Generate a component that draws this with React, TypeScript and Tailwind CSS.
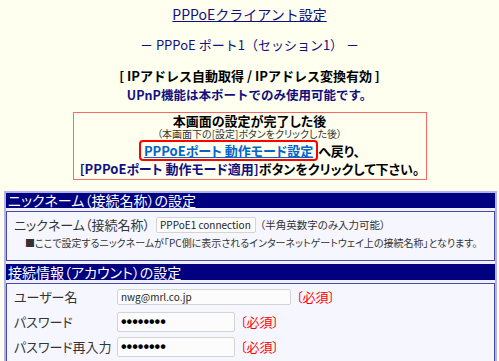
const FONT = "font-['Noto_Sans_CJK_JP','Noto_Sans',sans-serif]";
const PALT = "[font-feature-settings:'palt']";

function Required() {
  return <span className="ml-[5px] text-[13px] text-[#ff0000]">〔必須〕</span>;
}

interface FieldRowProps {
  label: string;
  value: string;
  password?: boolean;
  wide?: boolean;
}

function FieldRow({ label, value, password, wide }: FieldRowProps) {
  return (
    <div className="flex items-center">
      <span className="w-[103px] text-[13px] leading-[16px] text-[#333]">{label}</span>
      <div
        className={
          "flex items-center border border-[#d4d4d4] rounded-[2px] bg-[#fcfcfc] px-[3px] " +
          (wide ? "w-[174px] h-[16px]" : "w-[118px] h-[20px]")
        }
      >
        {password ? (
          <span className="font-['Liberation_Sans',sans-serif] text-[16px] font-bold leading-none text-black">
            ••••••••
          </span>
        ) : (
          <span className="text-[10px] leading-none text-[#222]">{value}</span>
        )}
      </div>
      <Required />
    </div>
  );
}

export default function App() {
  return (
    <div className={`min-h-screen w-[499px] bg-[#fffff0] text-black ${FONT}`}>
      {/* Heading block */}
      <div className="pt-[6px] text-center">
        <h1 className="text-[14px] leading-[16px] text-[#101080] underline">PPPoEクライアント設定</h1>
        <p className="mt-[15px] text-[13px] leading-[16px] text-[#101080]">－ PPPoE ポート1（セッション1） －</p>
        <p className="mt-[13px] text-[13px] font-bold leading-[19px]">[ IPアドレス自動取得 / IPアドレス変換有効 ]</p>
        <p className="text-[12.5px] font-bold leading-[19px] text-[#101080]">UPnP機能は本ポートでのみ使用可能です。</p>
      </div>

      {/* Notice box */}
      <div className={`mx-auto mt-[8px] w-[354px] border border-[#ff6666] pb-[2px] text-center ${PALT}`}>
        <p className="text-[13px] font-bold leading-[15px]">本画面の設定が完了した後</p>
        <p className="text-[10px] leading-[12px] text-[#333]">（本画面下の[設定]ボタンをクリックした後）</p>
        <div className="flex items-center justify-center">
          <span className="rounded-[4px] border-2 border-[#ff0000] px-[3px] text-[13px] font-bold leading-[17px] text-[#0066cc] underline">
            PPPoEポート 動作モード設定
          </span>
          <span className="text-[13px] font-bold leading-[17px]">へ戻り、</span>
        </div>
        <p className="text-[13px] font-bold leading-[16px]">
          <span className="text-[#101080]">[PPPoEポート 動作モード適用]</span>ボタンをクリックして下さい。
        </p>
      </div>

      {/* Settings table */}
      <div className={`ml-[4px] mt-[11px] flex w-[493px] flex-col gap-[3px] border-2 border-b-0 border-[#b4b4e4] bg-[#f0f0fc] ${PALT}`}>
        <div className="h-[15px] bg-[#000080] px-[2px] text-[14px] leading-[15px] text-white">ニックネーム（接続名称）の設定</div>
        <div className="border border-[#4848a8] bg-[#f6f6ff] px-[7px] pt-[5px] pb-[10px]">
          <div className="flex h-[16px] items-center">
            <span className="text-[13px] text-[#333]">ニックネーム（接続名称）</span>
            <div className="ml-[6px] flex h-[16px] w-[100px] items-center rounded-[2px] border border-[#d4d4d4] bg-[#fcfcfc] px-[3px]">
              <span className="text-[10px] leading-none text-[#222]">PPPoE1 connection</span>
            </div>
            <span className="ml-[4px] text-[10.5px] text-[#333]">（半角英数字のみ入力可能）</span>
          </div>
          <p className="mt-[3px] whitespace-nowrap pl-[11px] text-[10px] leading-[14px] text-[#333]">
            ■ここで設定するニックネームが「PC側に表示されるインターネットゲートウェイ上の接続名称」となります。
          </p>
        </div>
        <div className="h-[16px] bg-[#000080] px-[2px] text-[14px] leading-[16px] text-white">接続情報（アカウント）の設定</div>
        <div className="flex flex-col gap-[5px] border border-[#4848a8] bg-[#f6f6ff] px-[7px] pt-[3px] pb-[10px]">
          <FieldRow label="ユーザー名" value="nwg@mrl.co.jp" wide />
          <FieldRow label="パスワード" value="" password />
          <FieldRow label="パスワード再入力" value="" password />
        </div>
      </div>
    </div>
  );
}
